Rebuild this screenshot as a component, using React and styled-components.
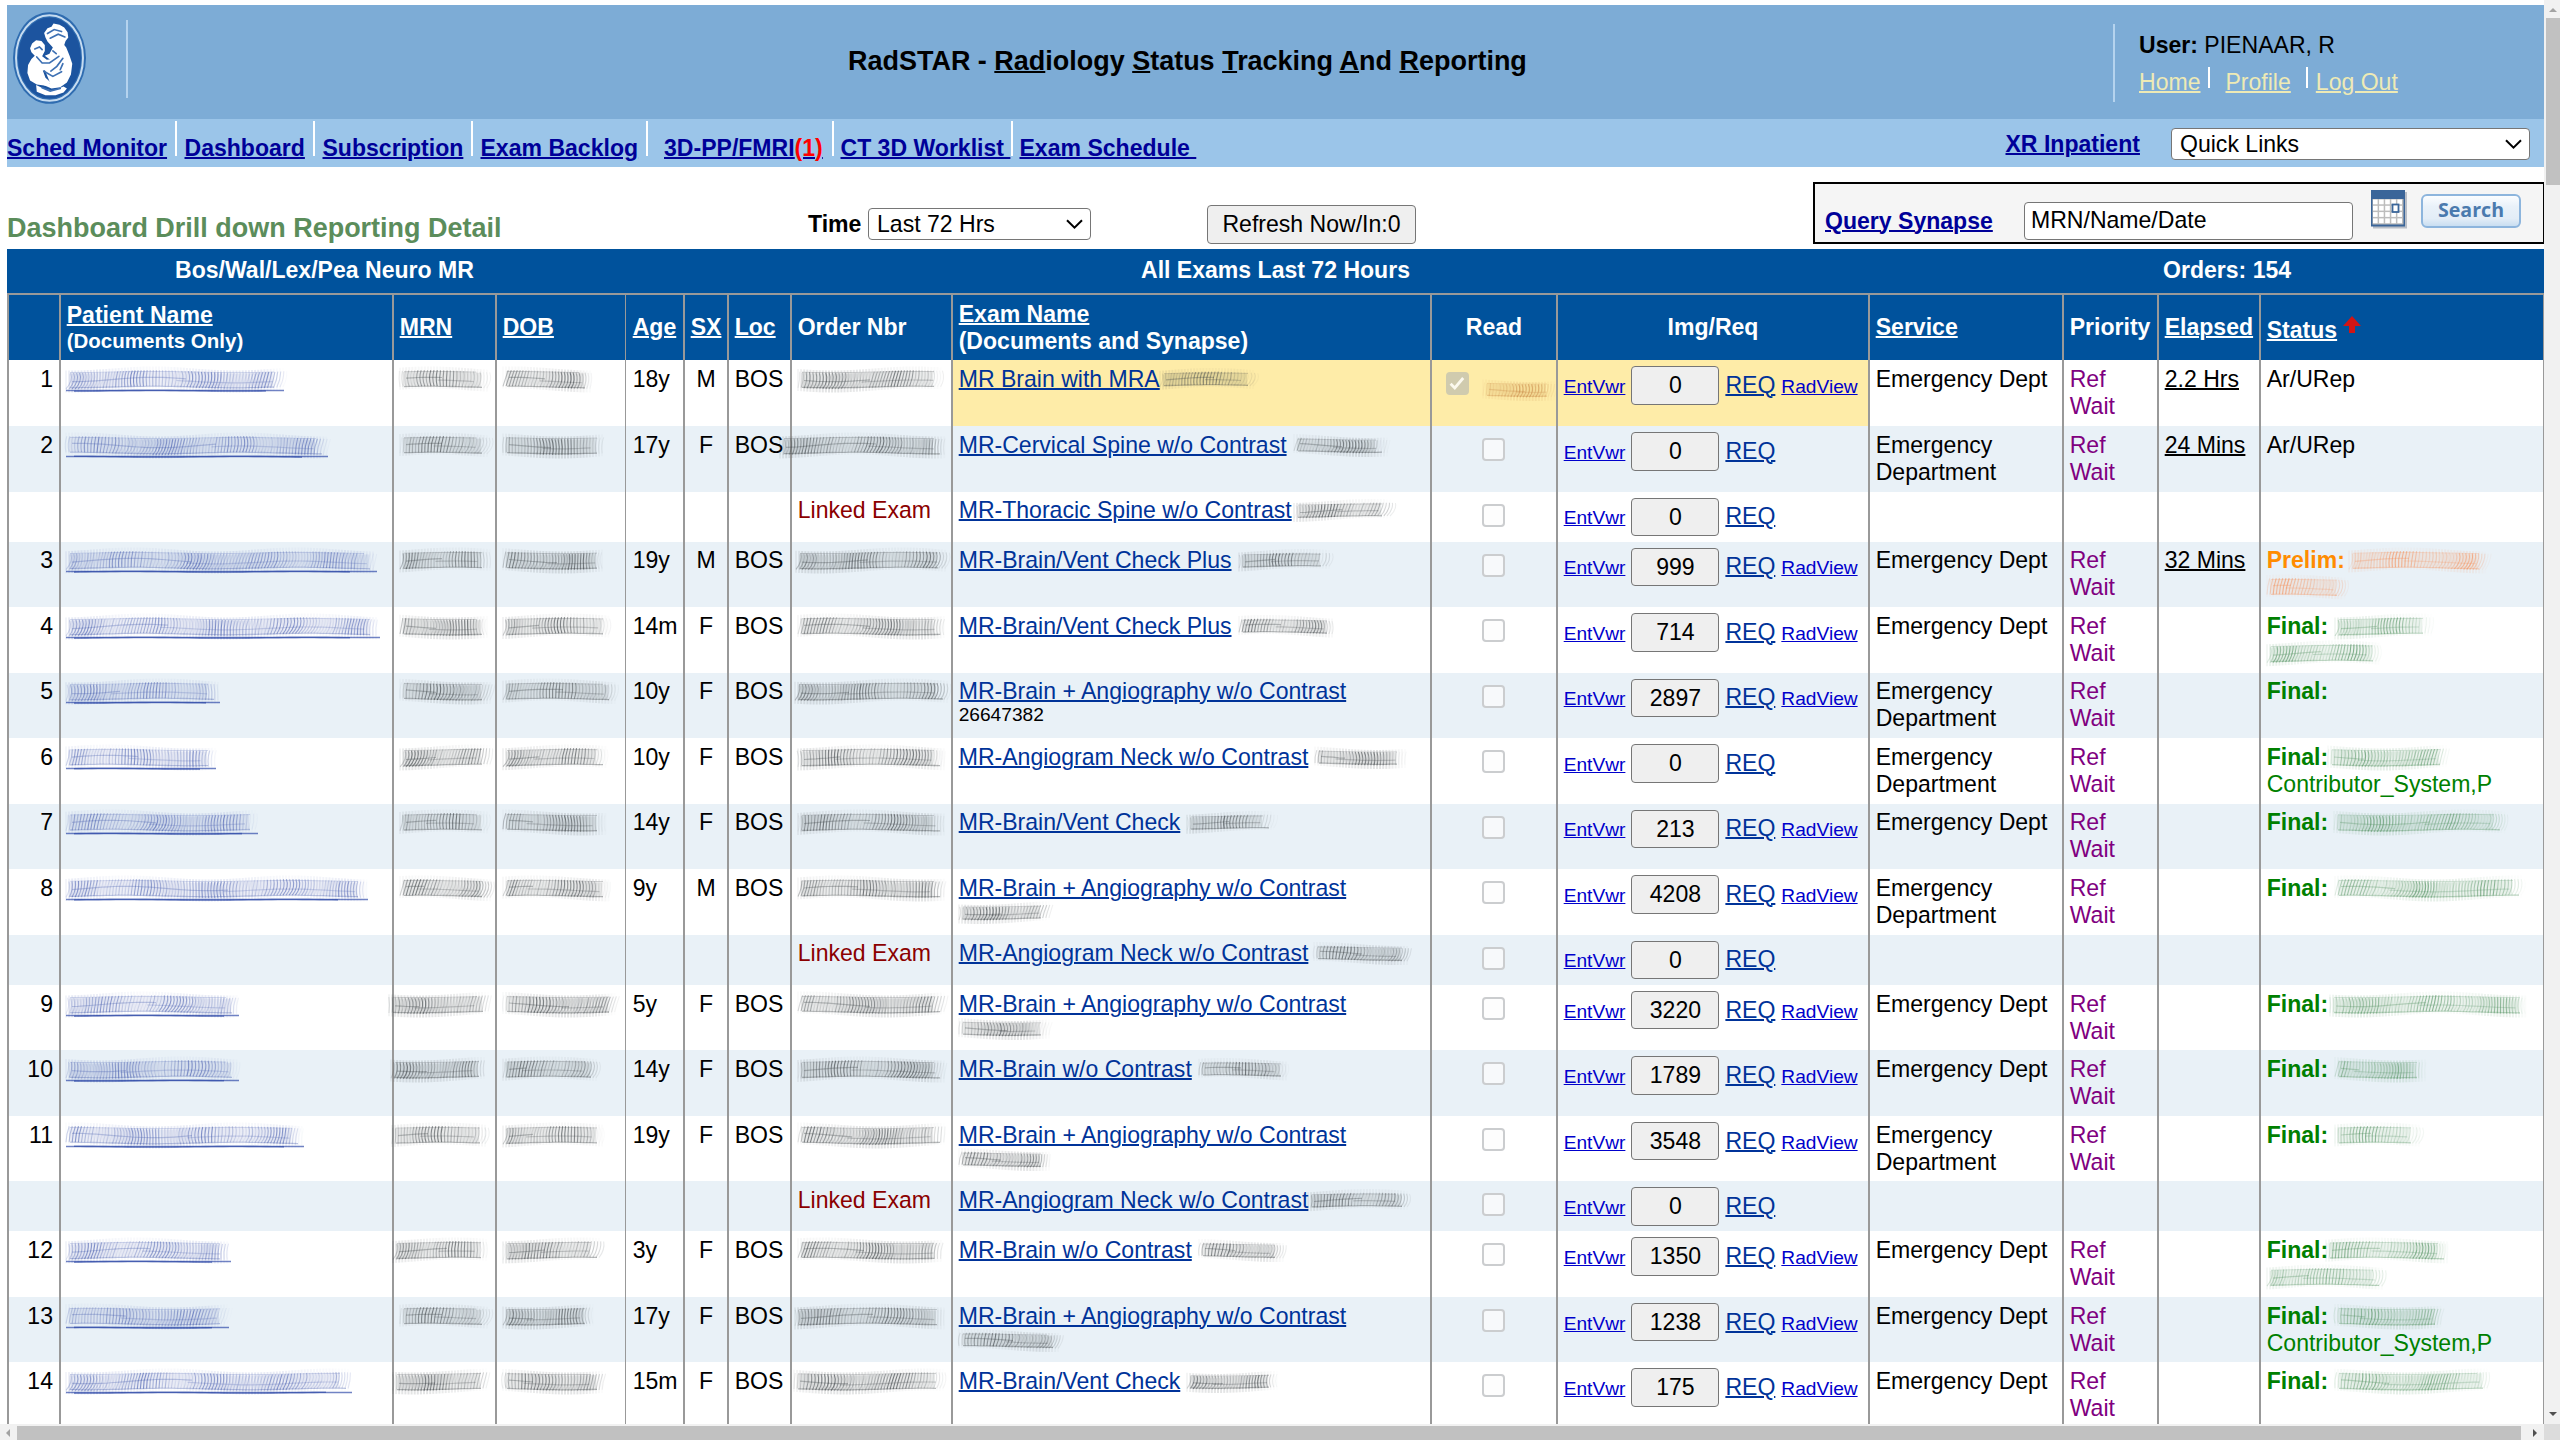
import React from "react";
import styled, { createGlobalStyle, css } from "styled-components";

const Global = createGlobalStyle`
  * { box-sizing: border-box; }
  html, body { margin: 0; padding: 0; background: #fff; overflow: hidden; }
  body { font-family: "Liberation Sans", Arial, sans-serif; font-size: 23.06px; line-height: 27px; color: #000; }
`;

/* ---------- window frame ---------- */
const Window = styled.div`
  display: grid;
  grid-template-columns: 2544px 16px;
  grid-template-rows: 1424px 16px;
  width: 2560px;
  height: 1440px;
  overflow: hidden;
`;
const Page = styled.div`
  overflow: hidden;
  padding: 5px 0 0 7px;
  display: flex;
  flex-direction: column;
  & > * { flex-shrink: 0; }
`;
const VTrack = styled.div`
  background: #f1f1f1;
  display: flex;
  flex-direction: column;
  align-items: center;
  padding-top: 8px;
  padding-left: 1px;
`;
const VThumb = styled.div`
  width: 14px;
  height: 167px;
  margin-top: 6px;
  margin-bottom: auto;
  margin-left: 1px;
  background: #c1c1c1;
`;
const HTrack = styled.div`
  background: #f1f1f1;
  display: flex;
  align-items: center;
  padding: 2px 7px 0 6px;
`;
const HThumb = styled.div`
  flex: 1;
  height: 14px;
  margin: 0 12px 0 7px;
  background: #c1c1c1;
`;
const Corner = styled.div`
  background: #dcdcdc;
`;
const Arrow = styled.svg`
  display: block;
  flex: none;
  fill: ${(p) => (p.$dark ? "#505050" : "#a3a3a3")};
  margin-bottom: ${(p) => p.$mb || 0}px;
`;

/* ---------- banner ---------- */
const Banner = styled.header`
  height: 114px;
  background: #7dacd6;
  display: flex;
  align-items: flex-start;
`;
const LogoSlot = styled.div`
  width: 119px;
  padding: 6px 0 0 5px;
`;
const Rule = styled.i`
  width: 2px;
  height: 78px;
  margin-top: ${(p) => p.$top}px;
  background: #b5d3ee;
`;
const BannerTitle = styled.h1`
  width: 1985px;
  padding-left: 720px;
  margin: 41px 0 0;
  font-size: 26.97px;
  line-height: 30px;
  font-weight: 700;
  white-space: nowrap;
`;
const UserBox = styled.div`
  margin: 26.5px 0 0 24px;
`;
const UserLinks = styled.div`
  display: flex;
  margin-top: 10px;
`;
const UserLink = styled.a`
  color: #eeeab5;
  text-decoration: underline;
  text-decoration-thickness: 2px;
`;
const UserSep = styled.i`
  width: 2px;
  height: 21px;
  margin: -2px ${(p) => p.$r}px 0 ${(p) => p.$l}px;
  background: #fff;
`;

/* ---------- navigation ---------- */
const Nav = styled.nav`
  height: 48px;
  background: #9bc5e9;
  display: flex;
  align-items: flex-start;
`;
const NavLink = styled.a`
  margin-top: ${(p) => p.$top || 16}px;
  width: ${(p) => p.$w}px;
  font-weight: 700;
  color: #000099;
  text-decoration: underline;
  text-decoration-thickness: 2px;
  white-space: pre;
  & > span { color: #f00; }
`;
const NavSep = styled.i`
  width: 2px;
  height: 35px;
  margin: 2px ${(p) => p.$r}px 0 ${(p) => p.$l}px;
  background: #fff;
`;
const Select = styled.div`
  display: flex;
  align-items: center;
  justify-content: space-between;
  width: ${(p) => p.$w}px;
  height: 32px;
  margin: ${(p) => p.$m};
  padding: 0 7px 0 8px;
  border: 1.4px solid #767676;
  border-radius: 4px;
  background: #fff;
`;

/* ---------- toolbar ---------- */
const Toolbar = styled.div`
  height: 82px;
  display: flex;
  align-items: flex-start;
`;
const Heading = styled.h2`
  width: 801px;
  margin: 46px 0 0;
  font-size: 26.97px;
  line-height: 30px;
  color: #5b8d5b;
`;
const TimeLabel = styled.b`
  width: 60px;
  margin-top: 43.5px;
`;
const Refresh = styled.button`
  width: 209px;
  height: 39px;
  margin: 38px 0 0 116px;
  padding: 0;
  border: 1.5px solid #767676;
  border-radius: 4px;
  background: #efefef;
  font: inherit;
`;
const SearchPanel = styled.div`
  width: 731px;
  height: 62px;
  margin: 15px 0 0 397px;
  border: 2px solid #000;
  border-right-width: 1px;
  background: #f5f5f5;
  display: flex;
  align-items: flex-start;
  padding-left: 10px;
`;
const QueryLink = styled(NavLink)`
  margin-top: 23.5px;
  width: 199px;
`;
const Input = styled.div`
  width: 329px;
  height: 38px;
  margin-top: 18px;
  padding: 3.5px 0 0 6px;
  border: 1.4px solid #767676;
  border-radius: 4px;
  background: #fff;
`;
const Calendar = styled.svg`
  display: block;
  margin: 6px 0 0 17px;
`;
const SearchButton = styled.button`
  width: 100px;
  height: 34px;
  margin: 10px 0 0 14px;
  padding: 0 0 4px;
  border: 2px solid #8db5dd;
  border-radius: 6px;
  background: linear-gradient(#fbfdff 0%, #e9f1f9 35%, #e3edf7 75%, #c9def1 100%);
  color: #4a7aae;
  font: 700 19.6px/28px "Open Sans", "Noto Sans", sans-serif;
`;

/* ---------- table ---------- */
const TableTitle = styled.div`
  height: 44px;
  background: #00529c;
  color: #fff;
  font-weight: 700;
  display: flex;
  padding: 7.5px 0 0 168px;
`;
const TitleCell = styled.span`
  width: ${(p) => p.$w}px;
`;
const columns = "52px 333px 103px 130px 58px 44px 63px 161px 479px 126px 312px 194px 95px 102px 285px";
const HeadRow = styled.div`
  display: grid;
  grid-template-columns: ${columns};
  height: 67px;
  border-top: 2px solid #999;
  background: #00529c;
  color: #fff;
  font-weight: 700;
`;
const gridLine = css`
  border-left: ${(p) => (p.$thin ? 1 : 2)}px solid #999;
  &:last-child { border-right: 1px solid #999; }
`;
const Th = styled.div`
  ${gridLine}
  display: flex;
  flex-direction: column;
  justify-content: center;
  align-items: ${(p) => (p.$center ? "center" : "flex-start")};
  padding-left: ${(p) => (p.$center ? 0 : p.$thin ? 6.7 : 5.7)}px;
  padding-top: ${(p) => p.$drop || 0}px;
  white-space: nowrap;
`;
const Sort = styled.u`
  text-decoration-thickness: 2px;
`;
const SmallHead = styled.span`
  font-size: 20.5px;
  line-height: 23.5px;
`;
const StatusHead = styled.span`
  display: flex;
  align-items: flex-start;
  & > svg { flex: none; margin: -1px 0 0 6px; }
`;
const Row = styled.div`
  display: grid;
  grid-template-columns: ${columns};
  height: ${(p) => p.$h}px;
  background: ${(p) => (p.$alt ? "#e9f1f7" : "#fff")};
`;
const Td = styled.div`
  ${gridLine}
  min-width: 0;
  padding: 5.6px 0 0 ${(p) => (p.$thin ? 6.7 : 5.7)}px;
  text-align: ${(p) => p.$align || "left"};
  color: ${(p) => p.$color || "#000"};
  background: ${(p) => (p.$hot ? "#feeca8" : "transparent")};
  white-space: nowrap;
`;
const NumTd = styled(Td)`
  text-align: right;
  padding-right: 6px;
`;
const SexTd = styled(Td)`
  text-align: center;
  padding-left: 0;
`;
const Line = styled.div`
  display: flex;
  height: ${(p) => p.$h || 27}px;
  line-height: ${(p) => p.$h || 27}px;
  font-size: ${(p) => p.$fs || 23.06}px;
`;
const ExamLink = styled.a`
  color: #003399;
  text-decoration: underline;
  text-decoration-thickness: 2px;
`;
const ReadTd = styled(Td)`
  display: flex;
  align-items: flex-start;
  padding: ${(p) => (p.$on ? "12px 0 0 14px" : "12px 0 0 50px")};
`;
const Box = styled.div`
  flex: none;
  width: 22.5px;
  height: 23px;
  border-radius: 4px;
  border: 2px solid ${(p) => (p.$on ? "#d0cbae" : "#cbcdcf")};
  background: ${(p) => (p.$on ? "#d0cbae" : "rgba(252,252,252,.7)")};
  & > svg { display: block; margin: -2px; }
`;
const ImgTd = styled(Td)`
  display: flex;
  align-items: flex-start;
  padding-top: 6px;
`;
const Viewer = styled.a`
  margin-top: 6.8px;
  font-size: 19.15px;
  color: #0000cc;
  text-decoration: underline;
  text-decoration-thickness: 1.4px;
`;
const Count = styled.button`
  width: 88px;
  height: 38.5px;
  margin: 0 6px;
  padding: 0.5px 0 0;
  border: 1.5px solid #767676;
  border-radius: 4px;
  background: #efefef;
  font: inherit;
  color: #000;
`;
const Req = styled(ExamLink)`
  margin: 5.8px 6px 0 0;
`;
const SmudgeSvg = styled.svg`
  display: block;
  flex: none;
  overflow: visible;
  margin-left: ${(p) => p.$ml || 0}px;
  margin-top: ${(p) => p.$mt || 0}px;
`;

/* ---------- smeared-out value ---------- */
function random(seed) {
  let s = (seed * 2654435761) >>> 0;
  return () => {
    s = (s + 0x6d2b79f5) >>> 0;
    let t = Math.imul(s ^ (s >>> 15), 1 | s);
    t = (t + Math.imul(t ^ (t >>> 7), 61 | t)) ^ t;
    return ((t ^ (t >>> 14)) >>> 0) / 4294967296;
  };
}

function Smudge({ w, seed, color = "#3c4246", underline, small, ml, mt }) {
  const r = random(seed + 11);
  const top = small ? 4 : 5.5;
  const h = small ? 13 : 16;
  const phase = r() * 6;
  const phase2 = r() * 6;
  const lean = 1 + r() * 3;
  const strokes = [];
  const haze = [];
  for (let x = 0; x < w - 1; x += 3.1) {
    const edge = Math.min(1, x / 12 + 0.5, (w - x) / 22 + 0.05);
    const wave = Math.sin(x / 26 + phase);
    const a = Math.max(0.1, 0.34 + 0.2 * Math.sin(x / 11 + phase2) + 0.24 * (r() - 0.5)) * edge;
    const dy = wave * 1.3;
    const slant = lean + 2 * Math.sin(x / 31 + phase2);
    const bend = 3 * Math.sin(x / 19 + phase);
    strokes.push(
      <path
        key={x}
        d={`M${(x + slant).toFixed(1)} ${(top + dy).toFixed(1)}q${bend.toFixed(1)} ${h / 2} ${(-slant).toFixed(1)} ${h}`}
        opacity={a.toFixed(2)}
      />
    );
    haze.push(
      <path
        key={x}
        d={`M${x.toFixed(1)} ${(top - 3 + wave * 2).toFixed(1)}v${h + 6}`}
        opacity={(0.09 * edge * (1 + wave * 0.6)).toFixed(3)}
      />
    );
  }
  const flow = (y, amp, from = 0, to = w) => {
    let d = "";
    for (let x = from; x <= to; x += 6) {
      d += `${d ? "L" : "M"}${x.toFixed(1)} ${(y + amp * Math.sin(x / 26 + phase)).toFixed(1)}`;
    }
    return d;
  };
  const cut = w * (0.3 + 0.3 * r());
  return (
    <SmudgeSvg width={w} height={small ? 21 : 27} $ml={ml} $mt={mt} stroke={color} fill="none" aria-hidden="true">
      <path d={flow(top + h / 2, 1.2, 3, w - 8)} strokeWidth={h - 2} opacity="0.1" />
      <g strokeWidth="2">{haze}</g>
      <g strokeWidth="1.1">{strokes}</g>
      <path d={flow(top + 0.5, 0.6, 4, w - 8)} strokeWidth="1" opacity="0.22" />
      <path d={flow(top + h * 0.5, 2.2, 6, cut)} strokeWidth="1.2" opacity="0.3" />
      <path d={flow(top + h * 0.62, 1.4, cut - 10, w - 10)} strokeWidth="1.2" opacity="0.22" />
      <path d={flow(top + h - 0.5, 0.8, 4, w - 6)} strokeWidth="1.3" opacity="0.36" />
      {underline && (
        <g stroke="#12309c">
          <path d={`M0 24.6H${w}`} strokeWidth="1.5" opacity="0.6" />
          <path d={flow(24.8, 0.5, 8, w * 0.92)} strokeWidth="1.6" opacity="0.45" />
        </g>
      )}
    </SmudgeSvg>
  );
}

function Chevron() {
  return (
    <svg width="17" height="10" viewBox="0 0 17 10" fill="none" stroke="#000" strokeWidth="2">
      <path d="M1 1.2 8.5 8.6 16 1.2" />
    </svg>
  );
}

function Logo() {
  return (
    <svg width="75" height="94" viewBox="36 33 224 280">
      <ellipse cx="148" cy="173" rx="109" ry="137" fill="#2f6cb0" />
      <ellipse cx="148" cy="173" rx="100" ry="128" fill="none" stroke="#c6dcf1" strokeWidth="6" />
      <ellipse cx="148" cy="173" rx="94" ry="121" fill="#1c549f" />
      <g fill="#fff">
        <path d="M132 98 142 84 154 80 160 70 178 74 192 82 202 96 204 112 196 122 192 134 198 142 208 166 216 190 212 222 200 246 180 260 154 264 130 254 150 248 142 228 134 208 148 198 166 184 150 178 134 166 148 160 158 142 142 124 136 112Z" />
        <path d="M90 144 96 130 108 120 124 122 134 134 134 152 126 168 140 178 156 176 176 160 188 166 168 192 146 208 128 210 136 232 152 246 138 256 110 252 90 240 82 218 84 194 94 176 104 166 94 156Z" />
        <path d="M108 254 134 266 160 270 190 258 200 264 190 276 166 284 136 284 110 274Z" />
      </g>
      <g stroke="#3d70b3" strokeWidth="5" fill="none" strokeLinecap="round">
        <path d="M142 100 162 88 184 94M150 114 174 102 194 110" />
        <path d="M104 146 118 140 126 148M110 170 126 188 148 188 176 168" />
        <path d="M188 174 170 198 152 212M134 214 158 228 184 214M126 262 150 272 180 264" />
        <path d="M188 190 180 208M158 152 168 160" />
      </g>
    </svg>
  );
}

function CalendarIcon() {
  return (
    <Calendar width="37" height="39" viewBox="0 0 37 39">
      <rect x="3" y="2" width="34" height="36.5" fill="#b9bec6" />
      <rect x="1" y="0" width="34" height="36.5" fill="#3a6599" />
      <rect x="2.5" y="9" width="31" height="25.5" fill="#bdbdbd" />
      {[0, 1, 2, 3].map((y) =>
        [0, 1, 2, 3, 4].map((x) => (
          <rect key={`${x}${y}`} x={3 + x * 6.1} y={9.5 + y * 6.3} width="4.6" height="4.8" fill="#fff" />
        ))
      )}
      <rect x="22.5" y="14.5" width="6" height="7.5" fill="#fff" stroke="#3a6599" strokeWidth="1.8" />
    </Calendar>
  );
}

/* ---------- data ---------- */
const C = "MR-Brain + Angiography w/o Contrast";
const N = "MR-Angiogram Neck w/o Contrast";
const DEPT = ["Emergency Dept"];
const LONG = ["Emergency", "Department"];
const rows = [
  { n: 1, name: 218, mrn: [0, 89], dob: 89, age: "18y", sex: "M", ord: [0, 146], exam: "MR Brain with MRA", ex: [0, 96], img: "0", rad: true, svc: DEPT, el: "2.2 Hrs", st: "Ar/URep", hot: true, h: 66 },
  { n: 2, name: 262, mrn: [0, 89], dob: 103, age: "17y", sex: "F", ord: [-18, 166], exam: "MR-Cervical Spine w/o Contrast", ex: [7, 94], img: "0", svc: LONG, el: "24 Mins", st: "Ar/URep", h: 65.5 },
  { linked: true, exam: "MR-Thoracic Spine w/o Contrast", ex: [2, 98], img: "0" },
  { n: 3, name: 311, mrn: [0, 92], dob: 103, age: "19y", sex: "M", ord: [-2, 152], exam: "MR-Brain/Vent Check Plus", ex: [7, 93], img: "999", rad: true, svc: DEPT, el: "32 Mins", st: "Prelim:", s1: [4, 138], s2: 80 },
  { n: 4, name: 314, mrn: [0, 89], dob: 108, age: "14m", sex: "F", ord: [0, 148], exam: "MR-Brain/Vent Check Plus", ex: [7, 97], img: "714", rad: true, svc: DEPT, st: "Final:", s1: [7, 98], s2: 115 },
  { n: 5, name: 154, mrn: [0, 92], dob: 113, age: "10y", sex: "F", ord: [-3, 154], exam: C, code: "26647382", img: "2897", rad: true, svc: LONG, st: "Final:" },
  { n: 6, name: 150, mrn: [0, 92], dob: 106, age: "10y", sex: "F", ord: [0, 148], exam: N, ex: [7, 92], img: "0", svc: LONG, st: "Final:", s1: [0, 120], s2t: "Contributor_System,P" },
  { n: 7, name: 192, mrn: [0, 89], dob: 104, age: "14y", sex: "F", ord: [0, 148], exam: "MR-Brain/Vent Check", ex: [7, 88], img: "213", rad: true, svc: DEPT, st: "Final:", s1: [6, 172] },
  { n: 8, name: 302, mrn: [0, 92], dob: 108, age: "9y", sex: "M", ord: [0, 148], exam: C, code2: 93, img: "4208", rad: true, svc: LONG, st: "Final:", s1: [7, 190] },
  { linked: true, exam: N, ex: [6, 96], img: "0", h: 50.45 },
  { n: 9, name: 173, mrn: [-11, 101], dob: 114, age: "5y", sex: "F", ord: [0, 148], exam: C, code2: 91, img: "3220", rad: true, svc: DEPT, st: "Final:", s1: [2, 198] },
  { n: 10, name: 173, mrn: [-9, 97], dob: 95, age: "14y", sex: "F", ord: [0, 148], exam: "MR-Brain w/o Contrast", ex: [7, 90], img: "1789", rad: true, svc: DEPT, st: "Final:", s1: [7, 92] },
  { n: 11, name: 238, mrn: [-8, 97], dob: 102, age: "19y", sex: "F", ord: [0, 148], exam: C, code2: 91, img: "3548", rad: true, svc: LONG, st: "Final:", s1: [7, 86] },
  { linked: true, exam: N, ex: [0, 101], img: "0" },
  { n: 12, name: 165, mrn: [-7, 96], dob: 100, age: "3y", sex: "F", ord: [0, 146], exam: "MR-Brain w/o Contrast", ex: [7, 86], img: "1350", rad: true, svc: DEPT, st: "Final:", s1: [-2, 124], s2: 118 },
  { n: 13, name: 163, mrn: [0, 89], dob: 93, age: "17y", sex: "F", ord: [-3, 150], exam: C, code2: 101, img: "1238", rad: true, svc: DEPT, st: "Final:", s1: [7, 108], s2t: "Contributor_System,P" },
  { n: 14, name: 286, mrn: [-7, 96], dob: 101, age: "15m", sex: "F", ord: [-4, 152], exam: "MR-Brain/Vent Check", ex: [7, 92], img: "175", rad: true, svc: DEPT, st: "Final:", s1: [7, 155] },
];

function ExamRow({ row, i }) {
  const base = i * 10;
  const tone = row.st === "Prelim:" ? "#ff8c00" : row.st === "Final:" ? "#008000" : "#000";
  const smear = row.st === "Prelim:" ? "#f58f58" : "#4f8f5e";
  return (
    <Row $h={row.h || (row.linked ? 50 : 65.5)} $alt={i % 2 === 1}>
      <NumTd>{row.n}</NumTd>
      <Td>{row.name && <Smudge w={row.name} ml={-1} seed={base + 1} color="#4a60b0" underline />}</Td>
      <Td>{row.mrn && <Smudge w={row.mrn[1]} ml={row.mrn[0]} seed={base + 2} />}</Td>
      <Td>{row.dob && <Smudge w={row.dob} seed={base + 3} />}</Td>
      <Td $thin>{row.age}</Td>
      <SexTd>{row.sex}</SexTd>
      <Td>{row.n && "BOS"}</Td>
      <Td $color={row.linked ? "#8b0000" : undefined}>
        {row.linked ? "Linked Exam" : <Smudge w={row.ord[1]} ml={row.ord[0]} seed={base + 4} />}
      </Td>
      <Td $hot={row.hot}>
        <Line>
          <ExamLink>{row.exam}</ExamLink>
          {row.ex && <Smudge w={row.ex[1]} ml={row.ex[0]} mt={3} seed={base + 5} small />}
        </Line>
        {row.code && <Line $h={19} $fs={19.15}>{row.code}</Line>}
        {row.code2 && <Smudge w={row.code2} seed={base + 6} small />}
      </Td>
      <ReadTd $hot={row.hot} $on={row.hot}>
        <Box $on={row.hot}>
          {row.hot && (
            <svg width="22" height="22" viewBox="0 0 22 22" fill="none" stroke="#fbf9ee" strokeWidth="2.8">
              <path d="M4.6 11.8 8.8 16 17.2 6" />
            </svg>
          )}
        </Box>
        {row.hot && <Smudge w={74} ml={14} mt={7} seed={77} color="#c98a48" small />}
      </ReadTd>
      <ImgTd $hot={row.hot}>
        <Viewer>EntVwr</Viewer>
        <Count>{row.img}</Count>
        <Req>REQ</Req>
        {row.rad && <Viewer>RadView</Viewer>}
      </ImgTd>
      <Td>{row.svc && row.svc.map((s) => <Line key={s}>{s}</Line>)}</Td>
      <Td $color="#800080">
        {row.n && (
          <>
            <Line>Ref</Line>
            <Line>Wait</Line>
          </>
        )}
      </Td>
      <Td>{row.el && <Sort>{row.el}</Sort>}</Td>
      <Td $color={tone}>
        {row.st && (
          <Line>
            {row.st === "Ar/URep" ? row.st : <b>{row.st}</b>}
            {row.s1 && <Smudge w={row.s1[1]} ml={row.s1[0]} seed={base + 7} color={smear} />}
          </Line>
        )}
        {row.s2 && <Smudge w={row.s2} seed={base + 8} color={smear} />}
        {row.s2t && <Line>{row.s2t}</Line>}
      </Td>
    </Row>
  );
}

export default function App() {
  return (
    <>
      <Global />
      <Window>
        <Page>
          <Banner>
            <LogoSlot>
              <Logo />
            </LogoSlot>
            <Rule $top={15} />
            <BannerTitle>
              RadSTAR - <Sort>Rad</Sort>iology <Sort>S</Sort>tatus <Sort>T</Sort>racking <Sort>A</Sort>nd <Sort>R</Sort>eporting
            </BannerTitle>
            <Rule $top={19} />
            <UserBox>
              <div>
                <b>User:</b> PIENAAR, R
              </div>
              <UserLinks>
                <UserLink>Home</UserLink>
                <UserSep $l={8} $r={15} />
                <UserLink>Profile</UserLink>
                <UserSep $l={15} $r={8} />
                <UserLink>Log Out</UserLink>
              </UserLinks>
            </UserBox>
          </Banner>
          <Nav>
            <NavLink $w={160}>Sched Monitor</NavLink>
            <NavSep $l={8} $r={7.5} />
            <NavLink $w={121}>Dashboard</NavLink>
            <NavSep $l={7.5} $r={7.5} />
            <NavLink $w={141}>Subscription</NavLink>
            <NavSep $l={7.5} $r={7.5} />
            <NavLink $w={158}>Exam Backlog</NavLink>
            <NavSep $l={7.5} $r={16} />
            <NavLink $w={160}>
              3D-PP/FMRI<span>(1)</span>
            </NavLink>
            <NavSep $l={7.5} $r={7} />
            <NavLink $w={170}>{"CT 3D Worklist "}</NavLink>
            <NavSep $l={0} $r={7} />
            <NavLink $w={986}>{"Exam Schedule "}</NavLink>
            <NavLink $top={11.5}>XR Inpatient</NavLink>
            <Select $w={359} $m="9px 14px 0 auto">
              Quick Links
              <Chevron />
            </Select>
          </Nav>
          <Toolbar>
            <Heading>Dashboard Drill down Reporting Detail</Heading>
            <TimeLabel>Time</TimeLabel>
            <Select $w={223} $m="41px 0 0">
              Last 72 Hrs
              <Chevron />
            </Select>
            <Refresh>Refresh Now/In:0</Refresh>
            <SearchPanel>
              <QueryLink>Query Synapse</QueryLink>
              <Input>MRN/Name/Date</Input>
              <CalendarIcon />
              <SearchButton>Search</SearchButton>
            </SearchPanel>
          </Toolbar>
          <TableTitle>
            <TitleCell $w={966}>Bos/Wal/Lex/Pea Neuro MR</TitleCell>
            <TitleCell $w={1022}>All Exams Last 72 Hours</TitleCell>
            <TitleCell>Orders: 154</TitleCell>
          </TableTitle>
          <HeadRow>
            <Th />
            <Th>
              <Sort>Patient Name</Sort>
              <SmallHead>(Documents Only)</SmallHead>
            </Th>
            <Th><Sort>MRN</Sort></Th>
            <Th><Sort>DOB</Sort></Th>
            <Th $thin><Sort>Age</Sort></Th>
            <Th><Sort>SX</Sort></Th>
            <Th><Sort>Loc</Sort></Th>
            <Th>Order Nbr</Th>
            <Th>
              <Sort>Exam Name</Sort>
              <span>(Documents and Synapse)</span>
            </Th>
            <Th $center>Read</Th>
            <Th $center>Img/Req</Th>
            <Th><Sort>Service</Sort></Th>
            <Th>Priority</Th>
            <Th><Sort>Elapsed</Sort></Th>
            <Th $drop={5}>
              <StatusHead>
                <Sort>Status</Sort>
                <svg width="18" height="17" viewBox="0 0 18 17" fill="#d01515">
                  <path d="M9 0 18 10H12V17H6V10H0Z" />
                </svg>
              </StatusHead>
            </Th>
          </HeadRow>
          {rows.map((row, i) => (
            <ExamRow key={i} row={row} i={i} />
          ))}
        </Page>
        <VTrack>
          <Arrow width="8" height="4" viewBox="0 0 8 4">
            <path d="M4 0 8 4H0Z" />
          </Arrow>
          <VThumb />
          <Arrow width="8" height="4" viewBox="0 0 8 4" $dark $mb={8}>
            <path d="M4 4 8 0H0Z" />
          </Arrow>
        </VTrack>
        <HTrack>
          <Arrow width="4" height="8" viewBox="0 0 4 8">
            <path d="M0 4 4 0V8Z" />
          </Arrow>
          <HThumb />
          <Arrow width="4" height="8" viewBox="0 0 4 8" $dark>
            <path d="M4 4 0 0V8Z" />
          </Arrow>
        </HTrack>
        <Corner />
      </Window>
    </>
  );
}
